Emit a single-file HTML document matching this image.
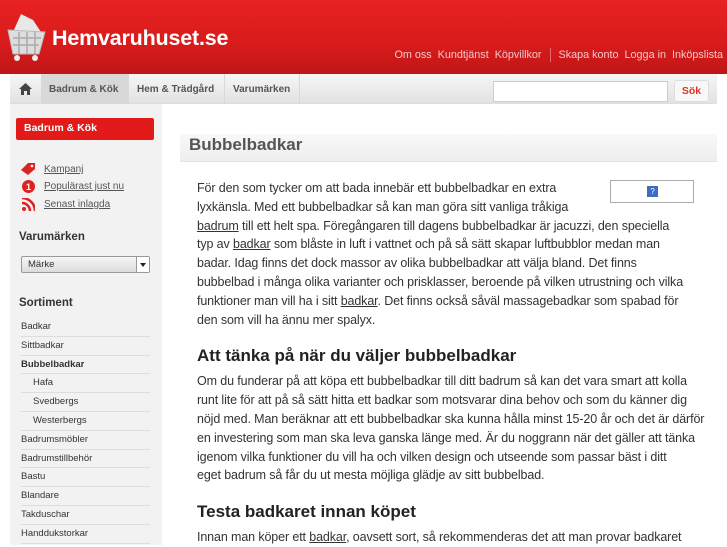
<!DOCTYPE html>
<html><head><meta charset="utf-8">
<style>
*{margin:0;padding:0;box-sizing:border-box}
body{width:727px;height:545px;overflow:hidden;background:#fff;font-family:"Liberation Sans",sans-serif;position:relative}
.hdr{position:absolute;left:0;top:0;width:727px;height:74px;background:linear-gradient(#e92222,#d81b1b 60%,#c01616)}
.logo{position:absolute;left:52px;top:26px;color:#fff;font-weight:bold;font-size:21.5px;letter-spacing:-0.2px}
.top{position:absolute;right:4px;top:48px;color:#f6c6c6;font-size:10.8px;white-space:nowrap}
.top span{margin-left:6px}
.sep{display:inline-block;width:1px;height:14px;background:#e86a6a;vertical-align:middle;margin:0 2px 0 8px}
.nav{position:absolute;left:10px;top:74px;width:707px;height:30px;background:linear-gradient(#f6f6f6,#e2e2e2);border-bottom:1px solid #ddd}
.nav div{position:absolute;top:0;height:30px;line-height:32px;font-size:10px;font-weight:bold;color:#555;border-right:1px solid #d8d8d8;white-space:nowrap}
.search{position:absolute;left:493px;top:81px;width:175px;height:21px;background:#fff;border:1px solid #ccc}
.sok{position:absolute;left:674px;top:80px;width:35px;height:22px;background:#f8f8f8;border:1px solid #ddd;border-radius:3px;color:#d32;font-weight:bold;font-size:10.5px;text-align:center;line-height:21px}
.side{position:absolute;left:10px;top:104px;width:152px;height:441px;background:#f2f2f2}
.redbtn{position:absolute;left:16px;top:118px;width:138px;height:22px;background:#e21a1a;border-radius:2px;color:#fff;font-weight:bold;font-size:10.5px;line-height:21px;padding-left:8px}
.lk{position:absolute;left:44px;font-size:10px;color:#555;text-decoration:underline}
.h{position:absolute;left:19px;font-size:11.5px;font-weight:bold;color:#333}
.sel{position:absolute;left:21px;top:256px;width:129px;height:17px;border:1px solid #999;background:linear-gradient(#f6f6f6,#dcdcdc);border-radius:2px;font-size:9.5px;color:#333;line-height:15px;padding-left:6px}
.sel b{position:absolute;right:0;top:0;width:13px;height:15px;border-left:1px solid #999;background:#fff}
.sel b:after{content:"";position:absolute;left:3px;top:6px;border:3px solid transparent;border-top:4px solid #222}
ul{position:absolute;left:21px;top:318px;width:129px;list-style:none}
li{height:18.8px;line-height:17px;font-size:9.5px;color:#333;border-bottom:1px solid #ddd}
li.s{padding-left:12px}
.title{position:absolute;left:180px;top:134px;width:537px;height:28px;background:linear-gradient(#f8f8f8,#eeeeee);border-bottom:1px solid #e4e4e4;font-size:17px;color:#555;font-weight:bold;padding-left:9px;line-height:22px}
.txt{position:absolute;left:197px;top:179px;width:500px;font-size:12.5px;line-height:18.8px;color:#333;letter-spacing:-0.12px;white-space:nowrap}
.txt u{color:#333}
.txt h2{font-size:17px;line-height:20px;margin:17px 0 6px;color:#222;letter-spacing:0}
.ph{position:absolute;left:413px;top:1px;width:84px;height:23px;border:1px solid #aaa}
.ph:after{content:"?";position:absolute;left:36px;top:5px;width:11px;height:11px;background:#3a6ec0;color:#fff;font-size:8px;text-align:center;line-height:11px}
</style></head><body>
<div class="hdr">
<svg style="position:absolute;left:5px;top:10px" width="42" height="52" viewBox="0 0 42 52"><path d="M8 22 L16 4 L28 10 L36 22 L30 24 Z" fill="#e8e8e8"/><path d="M3 20 L40 22 L34 44 L8 44 Z" fill="#ddd" stroke="#bbb"/><path d="M8 28 H36 M8 35 H34 M14 22 V44 M22 22 V44 M30 22 V44" stroke="#aaa" stroke-width="1.5"/><circle cx="12" cy="48" r="3" fill="#eee"/><circle cx="30" cy="48" r="3" fill="#eee"/></svg>
<div class="logo">Hemvaruhuset.se</div>
<div class="top"><span>Om oss</span><span>Kundtjänst</span><span>Köpvillkor</span><i class="sep"></i><span>Skapa konto</span><span>Logga in</span><span>Inköpslista</span></div>
</div>
<div class="nav">
<div style="left:0;width:31px;border:none;text-align:center"><svg width="13" height="12" viewBox="0 0 13 12" style="margin-top:9px"><path d="M6.5 0 L13 6 H11 V12 H8 V8 H5 V12 H2 V6 H0 Z" fill="#444"/></svg></div>
<div style="left:31px;width:88px;background:#d8d8d8;padding-left:8px">Badrum &amp; Kök</div>
<div style="left:119px;width:96px;padding-left:8px">Hem &amp; Trädgård</div>
<div style="left:215px;width:75px;padding-left:8px">Varumärken</div>
</div>
<div class="search"></div><div class="sok">Sök</div>
<div class="side"></div>
<div class="redbtn">Badrum &amp; Kök</div>
<svg style="position:absolute;left:21px;top:162px" width="15" height="13"><path d="M0 8 L7 1 H14 V7 L7 13 Z" fill="#d22"/><circle cx="11" cy="4" r="1.3" fill="#fff"/></svg>
<div class="lk" style="top:164px">Kampanj</div>
<svg style="position:absolute;left:22px;top:180px" width="13" height="13"><circle cx="6.5" cy="6.5" r="6.5" fill="#d22"/><text x="4" y="10" font-size="9" font-weight="bold" fill="#fff" font-family="Liberation Sans">1</text></svg>
<div class="lk" style="top:181px">Populärast just nu</div>
<svg style="position:absolute;left:22px;top:198px" width="13" height="13"><circle cx="2" cy="11" r="2" fill="#d22"/><path d="M0 5 A8 8 0 0 1 8 13 M0 0 A13 13 0 0 1 13 13" stroke="#d22" stroke-width="2.5" fill="none"/></svg>
<div class="lk" style="top:199px">Senast inlagda</div>
<div class="h" style="top:231px">Varumärken</div>
<div class="sel">Märke<b></b></div>
<div class="h" style="top:297px">Sortiment</div>
<ul><li>Badkar</li><li>Sittbadkar</li><li><b>Bubbelbadkar</b></li><li class="s">Hafa</li><li class="s">Svedbergs</li><li class="s">Westerbergs</li><li>Badrumsmöbler</li><li>Badrumstillbehör</li><li>Bastu</li><li>Blandare</li><li>Takduschar</li><li>Handdukstorkar</li></ul>
<div class="title">Bubbelbadkar</div>
<div class="txt"><div class="ph"></div>För den som tycker om att bada innebär ett bubbelbadkar en extra<br>lyxkänsla. Med ett bubbelbadkar så kan man göra sitt vanliga tråkiga<br><u>badrum</u> till ett helt spa. Föregångaren till dagens bubbelbadkar är jacuzzi, den speciella<br>typ av <u>badkar</u> som blåste in luft i vattnet och på så sätt skapar luftbubblor medan man<br>badar. Idag finns det dock massor av olika bubbelbadkar att välja bland. Det finns<br>bubbelbad i många olika varianter och prisklasser, beroende på vilken utrustning och vilka<br>funktioner man vill ha i sitt <u>badkar</u>. Det finns också såväl massagebadkar som spabad för<br>den som vill ha ännu mer spalyx.
<h2>Att tänka på när du väljer bubbelbadkar</h2>
Om du funderar på att köpa ett bubbelbadkar till ditt badrum så kan det vara smart att kolla<br>runt lite för att på så sätt hitta ett badkar som motsvarar dina behov och som du känner dig<br>nöjd med. Man beräknar att ett bubbelbadkar ska kunna hålla minst 15-20 år och det är därför<br>en investering som man ska leva ganska länge med. Är du noggrann när det gäller att tänka<br>igenom vilka funktioner du vill ha och vilken design och utseende som passar bäst i ditt<br>eget badrum så får du ut mesta möjliga glädje av sitt bubbelbad.
<h2>Testa badkaret innan köpet</h2>
Innan man köper ett <u>badkar</u>, oavsett sort, så rekommenderas det att man provar badkaret
</div>
</body></html>
